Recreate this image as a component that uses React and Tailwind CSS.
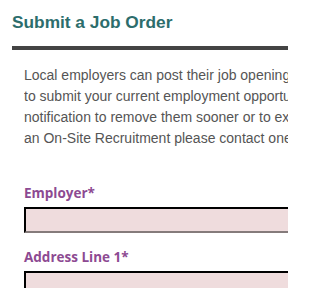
import React from 'react';

const JobOrderForm = () => {
  return (
    <div className="w-[288px] h-[288px] overflow-hidden bg-white">
      <div className="w-[288px] pl-[12px]">
        <h1 className="pt-[11px] text-[17.3px] leading-[22px] font-bold text-[#2c6d6c] font-['Liberation_Sans',Arial,sans-serif]">
          Submit a Job Order
        </h1>
        <div className="mt-[13px] -mr-[20px] h-[4px] bg-[#444444]"></div>

        <div className="pl-[12px] pt-[15px]">
          <p className="whitespace-nowrap overflow-hidden text-[14px] leading-[21px] text-[#555555] font-['Liberation_Sans',Arial,sans-serif]">
            Local employers can post their job opening
            <br />
            to submit your current employment opportu
            <br />
            notification to remove them sooner or to ex
            <br />
            an On-Site Recruitment please contact one
          </p>

          {/* Form fields */}
          <form className="pt-[34px]">
            <label className="block text-[13.5px] leading-[20px] font-bold text-[#8d4a92] font-['Open_Sans',sans-serif]">
              Employer*
            </label>
            <input
              type="text"
              className="mt-[4px] block w-[300px] h-[26px] bg-[#efdcdd] border-2 [border-style:inset] border-t-[#333333] border-l-[#333333] border-b-[#857b7b] border-r-[#857b7b]"
            />
            <label className="block mt-[14px] text-[13.5px] leading-[20px] font-bold text-[#8d4a92] font-['Open_Sans',sans-serif]">
              Address Line 1*
            </label>
            <input
              type="text"
              className="mt-[4px] block w-[300px] h-[26px] bg-[#efdcdd] border-2 [border-style:inset] border-t-[#333333] border-l-[#333333] border-b-[#857b7b] border-r-[#857b7b]"
            />
          </form>
        </div>
      </div>
    </div>
  );
};

export default function App() {
  return <JobOrderForm />;
}
